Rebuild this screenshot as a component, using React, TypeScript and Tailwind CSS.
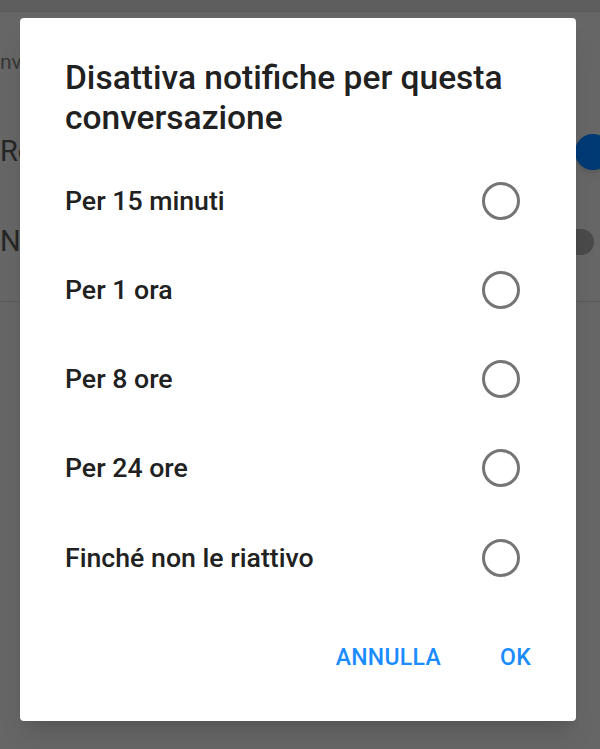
import React from 'react';

const OPTIONS = ['Per 15 minuti', 'Per 1 ora', 'Per 8 ore', 'Per 24 ore', 'Finché non le riattivo'];

function Radio() {
  return (
    <svg width="40" height="40" viewBox="0 0 40 40" className="shrink-0">
      <circle cx="20" cy="20" r="17.5" fill="none" stroke="#757575" strokeWidth="3" />
    </svg>
  );
}

export default function App() {
  return (
    <div className="relative h-[749px] w-[600px] overflow-hidden bg-[#666666] font-['Roboto',sans-serif]">
      {/* page behind the scrim */}
      <div className="h-[12px] bg-[#5e5e5e] border-b border-[#575757]" />
      <div className="mt-[36px] h-[28px] text-[21px] leading-[28px] text-[#363636]">nv</div>
      <div className="mt-[56px] flex h-[40px] items-center justify-between text-[29px] text-[#262626]">
        <span>Re</span>
        <span className="h-[36px] w-[36px] -mr-[11px] rounded-full bg-[#003a75] shadow-md" />
      </div>
      <div className="mt-[50px] flex h-[40px] items-center justify-between text-[29px] text-[#262626]">
        <span>No</span>
        <span className="h-[26px] w-[40px] mr-[6px] rounded-full bg-[#4a4a4a]" />
      </div>
      <div className="mt-[39px] border-b border-[#5a5a5a]" />

      {/* dialog */}
      <div className="absolute left-[20px] top-[18px] w-[556px] h-[703px] rounded-[4px] bg-white shadow-xl flex flex-col">
        <h2 className="px-[45px] pt-[40px] text-[33.5px] leading-[40px] font-medium text-[#212121]">
          Disattiva notifiche per questa conversazione
        </h2>
        <div className="mt-[18px] flex flex-col">
          {OPTIONS.map((o) => (
            <div key={o} className="flex h-[89.25px] items-center justify-between pl-[45px] pr-[55px]">
              <span className="text-[26.7px] font-medium text-[#212121]">{o}</span>
              <Radio />
            </div>
          ))}
        </div>
        <div className="mt-auto mb-[46px] flex justify-end gap-[59px] pr-[45px] text-[23px] font-medium tracking-[0.3px] text-[#1a8cff]">
          <span>ANNULLA</span>
          <span>OK</span>
        </div>
      </div>
    </div>
  );
}
